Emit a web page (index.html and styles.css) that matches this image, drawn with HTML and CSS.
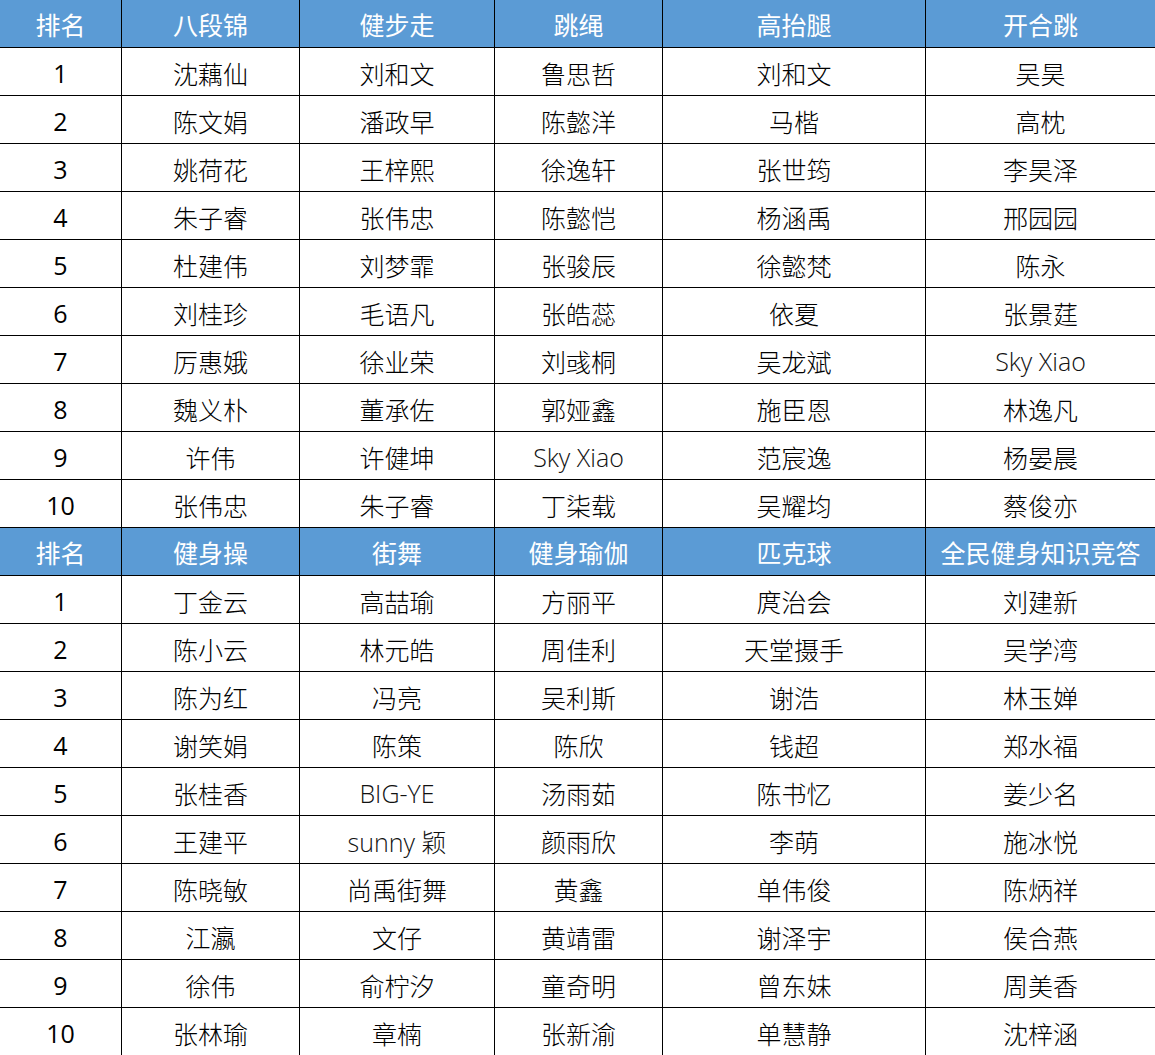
FILE: index.html
```html
<!DOCTYPE html>
<html lang="zh-CN">
<head>
<meta charset="utf-8">
<title>排名</title>
<link rel="stylesheet" href="styles.css">
</head>
<body>
<div class="grid">
  <div class="c h">排名</div><div class="c h">八段锦</div><div class="c h">健步走</div><div class="c h">跳绳</div><div class="c h">高抬腿</div><div class="c h">开合跳</div>
  <div class="c n">1</div><div class="c">沈藕仙</div><div class="c">刘和文</div><div class="c">鲁思哲</div><div class="c">刘和文</div><div class="c">吴昊</div>
  <div class="c n">2</div><div class="c">陈文娟</div><div class="c">潘政早</div><div class="c">陈懿洋</div><div class="c">马楷</div><div class="c">高枕</div>
  <div class="c n">3</div><div class="c">姚荷花</div><div class="c">王梓熙</div><div class="c">徐逸轩</div><div class="c">张世筠</div><div class="c">李昊泽</div>
  <div class="c n">4</div><div class="c">朱子睿</div><div class="c">张伟忠</div><div class="c">陈懿恺</div><div class="c">杨涵禹</div><div class="c">邢园园</div>
  <div class="c n">5</div><div class="c">杜建伟</div><div class="c">刘梦霏</div><div class="c">张骏辰</div><div class="c">徐懿梵</div><div class="c">陈永</div>
  <div class="c n">6</div><div class="c">刘桂珍</div><div class="c">毛语凡</div><div class="c">张皓蕊</div><div class="c">依夏</div><div class="c">张景莛</div>
  <div class="c n">7</div><div class="c">厉惠娥</div><div class="c">徐业荣</div><div class="c">刘彧桐</div><div class="c">吴龙斌</div><div class="c l">Sky Xiao</div>
  <div class="c n">8</div><div class="c">魏义朴</div><div class="c">董承佐</div><div class="c">郭娅鑫</div><div class="c">施臣恩</div><div class="c">林逸凡</div>
  <div class="c n">9</div><div class="c">许伟</div><div class="c">许健坤</div><div class="c l">Sky Xiao</div><div class="c">范宸逸</div><div class="c">杨晏晨</div>
  <div class="c n">10</div><div class="c">张伟忠</div><div class="c">朱子睿</div><div class="c">丁柒载</div><div class="c">吴耀均</div><div class="c">蔡俊亦</div>
  <div class="c h">排名</div><div class="c h">健身操</div><div class="c h">街舞</div><div class="c h">健身瑜伽</div><div class="c h">匹克球</div><div class="c h">全民健身知识竞答</div>
  <div class="c n">1</div><div class="c">丁金云</div><div class="c">高喆瑜</div><div class="c">方丽平</div><div class="c">庹治会</div><div class="c">刘建新</div>
  <div class="c n">2</div><div class="c">陈小云</div><div class="c">林元皓</div><div class="c">周佳利</div><div class="c">天堂摄手</div><div class="c">吴学湾</div>
  <div class="c n">3</div><div class="c">陈为红</div><div class="c">冯亮</div><div class="c">吴利斯</div><div class="c">谢浩</div><div class="c">林玉婵</div>
  <div class="c n">4</div><div class="c">谢笑娟</div><div class="c">陈策</div><div class="c">陈欣</div><div class="c">钱超</div><div class="c">郑水福</div>
  <div class="c n">5</div><div class="c">张桂香</div><div class="c l">BIG-YE</div><div class="c">汤雨茹</div><div class="c">陈书忆</div><div class="c">姜少名</div>
  <div class="c n">6</div><div class="c">王建平</div><div class="c l">sunny 颖</div><div class="c">颜雨欣</div><div class="c">李萌</div><div class="c">施冰悦</div>
  <div class="c n">7</div><div class="c">陈晓敏</div><div class="c">尚禹街舞</div><div class="c">黄鑫</div><div class="c">单伟俊</div><div class="c">陈炳祥</div>
  <div class="c n">8</div><div class="c">江瀛</div><div class="c">文仔</div><div class="c">黄靖雷</div><div class="c">谢泽宇</div><div class="c">侯合燕</div>
  <div class="c n">9</div><div class="c">徐伟</div><div class="c">俞柠汐</div><div class="c">童奇明</div><div class="c">曾东妹</div><div class="c">周美香</div>
  <div class="c n">10</div><div class="c">张林瑜</div><div class="c">章楠</div><div class="c">张新渝</div><div class="c">单慧静</div><div class="c">沈梓涵</div>
</div>
</body>
</html>
```
FILE: styles.css
```css
html, body {
  margin: 0;
  padding: 0;
  background: #ffffff;
}
.grid {
  display: grid;
  grid-template-columns: 122px 178px 195px 168px 263px 229px;
  grid-auto-rows: 48px;
  width: 1155px;
  font-family: "Open Sans", "Noto Sans CJK SC", sans-serif;
  font-size: 25px;
  font-weight: 300;
  color: #000000;
}
.c {
  box-sizing: border-box;
  border-right: 1px solid #000;
  border-bottom: 1px solid #000;
  display: flex;
  align-items: center;
  justify-content: center;
  padding-top: 2px;
  white-space: nowrap;
  overflow: hidden;
}
.c:nth-child(6n) {
  border-right: none;
}
.n {
  font-weight: 400;
}
.l {
  font-weight: 300;
  color: #111111;
}
.h {
  background: #5b9bd5;
  color: #ffffff;
  font-weight: 400;
  padding-top: 0;
}
```
